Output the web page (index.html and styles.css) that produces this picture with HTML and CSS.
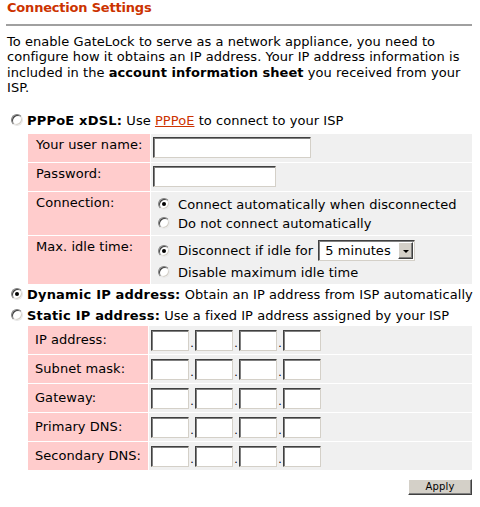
FILE: index.html
```html
<!doctype html>
<html lang="en">
  <head>
    <meta charset="utf-8">
    <title>Connection Settings</title>
    <link rel="stylesheet" href="styles.css">
  </head>
  <body>
    <div class="page">
      <h1 class="title">Connection Settings</h1>
      <div class="rule"></div>
      <p class="intro">To enable GateLock to serve as a network appliance, you need to configure how it obtains an IP address. Your IP address information is included in the <b>account information sheet</b> you received from your ISP.</p>

      <div class="option option-first"><span class="radio"></span><span><b>PPPoE xDSL:</b> Use <a href="#">PPPoE</a> to connect to your ISP</span></div>
      <div class="fields pppoe">
        <div class="label">Your user name:</div>
        <div class="value"><span class="textbox user"></span></div>

        <div class="label">Password:</div>
        <div class="value"><span class="textbox pass"></span></div>

        <div class="label">Connection:</div>
        <div class="value choices">
          <div class="choice"><span class="radio on"></span>Connect automatically when disconnected</div>
          <div class="choice"><span class="radio"></span>Do not connect automatically</div>
        </div>

        <div class="label">Max. idle time:</div>
        <div class="value choices idle">
          <div class="choice"><span class="radio on"></span>Disconnect if idle for
            <span class="select"><span class="select-text">5 minutes</span><span class="select-btn"><span class="arrow"></span></span></span>
          </div>
          <div class="choice"><span class="radio"></span>Disable maximum idle time</div>
        </div>
      </div>

      <div class="option"><span class="radio on"></span><span><b>Dynamic IP address:</b> Obtain an IP address from ISP automatically</span></div>
      <div class="option"><span class="radio"></span><span><b>Static IP address:</b> Use a fixed IP address assigned by your ISP</span></div>
      <div class="fields static">
        <div class="label">IP address:</div>
        <div class="value"><span class="ip"><span class="textbox octet"></span><i>.</i><span class="textbox octet"></span><i>.</i><span class="textbox octet"></span><i>.</i><span class="textbox octet"></span></span></div>

        <div class="label">Subnet mask:</div>
        <div class="value"><span class="ip"><span class="textbox octet"></span><i>.</i><span class="textbox octet"></span><i>.</i><span class="textbox octet"></span><i>.</i><span class="textbox octet"></span></span></div>

        <div class="label">Gateway:</div>
        <div class="value"><span class="ip"><span class="textbox octet"></span><i>.</i><span class="textbox octet"></span><i>.</i><span class="textbox octet"></span><i>.</i><span class="textbox octet"></span></span></div>

        <div class="label">Primary DNS:</div>
        <div class="value"><span class="ip"><span class="textbox octet"></span><i>.</i><span class="textbox octet"></span><i>.</i><span class="textbox octet"></span><i>.</i><span class="textbox octet"></span></span></div>

        <div class="label">Secondary DNS:</div>
        <div class="value"><span class="ip"><span class="textbox octet"></span><i>.</i><span class="textbox octet"></span><i>.</i><span class="textbox octet"></span><i>.</i><span class="textbox octet"></span></span></div>
      </div>

      <div class="actions"><button class="btn" type="button">Apply</button></div>
    </div>
  </body>
</html>
```

FILE: styles.css
```css
body {
  margin: 0;
  background: #fff;
  color: #000;
  font-family: "DejaVu Sans", Verdana, sans-serif;
  font-size: 13px;
  letter-spacing: 0.05px;
}

.option b {
  letter-spacing: 0.2px;
}

.page {
  padding: 0 8px 0 7px;
}

.title {
  margin: 0;
  font-size: 13px;
  line-height: 16px;
  font-weight: bold;
  letter-spacing: -0.2px;
  color: #cc3300;
}

.rule {
  height: 2px;
  margin: 8px 0 0 -1px;
  background: #a0a0a0;
}

.intro {
  margin: 8px 0 0;
  line-height: 15.4px;
}

a {
  color: #cc3300;
}

/* radio rows above each table */
.option {
  display: flex;
  align-items: center;
  height: 21px;
  white-space: nowrap;
}
.option-first { margin-top: 14px; }
.option .radio { margin: 0 4px 0 4px; }

.radio {
  display: inline-block;
  position: relative;
  flex: none;
  width: 12px;
  height: 12px;
  box-sizing: border-box;
  border-radius: 50%;
  border: 1px solid;
  border-color: #808080 #e8e8e8 #e8e8e8 #808080;
  box-shadow: inset 1px 1px 0 #404040, inset -1px -1px 0 #d4d0c8;
  background: #fff;
  vertical-align: middle;
}
.radio.on::after {
  content: "";
  position: absolute;
  left: 3px;
  top: 3px;
  width: 4px;
  height: 4px;
  border-radius: 50%;
  background: #000;
}

.fields {
  display: grid;
  gap: 1px;
  margin-left: 21px;
  width: 444px;
}
.pppoe {
  grid-template-columns: 122px 321px;
  margin-top: 3px;
}
.static {
  grid-template-columns: 120px 323px;
  grid-auto-rows: 28px;
}

.label {
  background: #ffcccc;
  padding: 3px 8px;
  line-height: 15px;
  white-space: nowrap;
}
.static .label {
  display: flex;
  align-items: center;
  padding: 0 7px;
}

.value {
  background: #f0f0f0;
  padding: 3px 2px 4px;
}
.static .value {
  padding: 4px 2px 0;
}

.textbox {
  display: block;
  height: 21px;
  box-sizing: border-box;
  background: #fff;
  border: 1px solid;
  border-color: #404040 #d4d0c8 #d4d0c8 #404040;
  box-shadow: inset 1px 1px 0 #808080;
}
.user { width: 158px; }
.pass { width: 123px; }

.ip {
  display: flex;
  align-items: flex-end;
}
.octet { width: 38px; }
.ip i {
  font-style: normal;
  width: 6px;
  text-align: center;
  line-height: 14px;
  font-size: 11px;
  letter-spacing: 0;
}

.choices {
  padding: 3px 2px 2px 7px;
}
.choice {
  display: flex;
  align-items: center;
  height: 19px;
  white-space: nowrap;
}
.choice .radio { margin-right: 8px; }
.idle .choice:first-child { height: 24px; }

.select {
  display: inline-flex;
  margin-left: 5px;
  width: 97px;
  height: 21px;
  box-sizing: border-box;
  background: #fff;
  border: 1px solid;
  border-color: #404040 #d4d0c8 #d4d0c8 #404040;
  box-shadow: inset 1px 1px 0 #808080;
  padding: 1px;
}
.select-text {
  flex: 1;
  padding-left: 5px;
  line-height: 17px;
}
.select-btn {
  display: flex;
  align-items: center;
  justify-content: center;
  width: 15px;
  box-sizing: border-box;
  background: #d4d0c8;
  border: 1px solid;
  border-color: #fff #404040 #404040 #fff;
  box-shadow: inset -1px -1px 0 #808080;
}
.arrow {
  width: 0;
  height: 0;
  border-left: 3px solid transparent;
  border-right: 3px solid transparent;
  border-top: 3px solid #000;
  margin-top: 1px;
}

.actions {
  display: flex;
  justify-content: flex-end;
  margin-top: 9px;
}
.btn {
  width: 64px;
  height: 16px;
  padding: 0;
  font-family: "DejaVu Sans", Verdana, sans-serif;
  font-size: 10px;
  line-height: 12px;
  letter-spacing: 0.2px;
  color: #000;
  background: #d4d0c8;
  border: 1px solid;
  border-color: #fff #404040 #404040 #fff;
  box-shadow: inset -1px -1px 0 #808080;
}
```
